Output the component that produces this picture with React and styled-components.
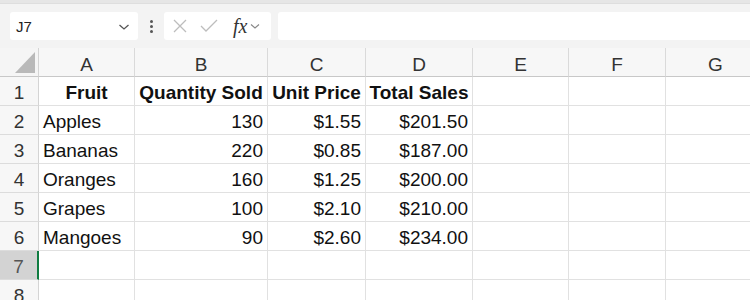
import styled, { createGlobalStyle } from 'styled-components'

const GlobalStyle = createGlobalStyle`
	html, body {
		margin: 0;
		padding: 0;
		background: #f3f3f3;
		font-family: 'Liberation Sans', Arial, sans-serif;
		overflow: hidden;
	}
`

const columns = ['A', 'B', 'C', 'D', 'E', 'F', 'G']
const widths = [96, 133, 98, 107, 96, 97, 100]

const rows = [
	['Fruit', 'Quantity Sold', 'Unit Price', 'Total Sales'],
	['Apples', '130', '$1.55', '$201.50'],
	['Bananas', '220', '$0.85', '$187.00'],
	['Oranges', '160', '$1.25', '$200.00'],
	['Grapes', '100', '$2.10', '$210.00'],
	['Mangoes', '90', '$2.60', '$234.00'],
	[],
	[],
]

function Chevron() {
	return (
		<svg width="12" height="8" viewBox="0 0 12 8">
			<path d="M1.5 2 L6 6 L10.5 2" fill="none" stroke="#555" strokeWidth="1.3" />
		</svg>
	)
}

function App() {
	return (
		<>
			<GlobalStyle />
			<Page>
				<TopStrip />
				<FormulaBar>
					<NameBox>
						<span>J7</span>
						<Chevron />
					</NameBox>
					<Dots>
						<i />
						<i />
						<i />
					</Dots>
					<FxBox>
						<svg width="18" height="18" viewBox="0 0 18 18">
							<path d="M3 3 L15 15 M15 3 L3 15" stroke="#bdbdbd" strokeWidth="1.3" />
						</svg>
						<svg width="20" height="18" viewBox="0 0 20 18">
							<path d="M2 9 L7 14 L18 3" fill="none" stroke="#bdbdbd" strokeWidth="1.3" />
						</svg>
						<Fx>
							fx
							<SmallChevron>
								<svg width="10" height="7" viewBox="0 0 10 7">
									<path d="M1 1.5 L5 5 L9 1.5" fill="none" stroke="#888" strokeWidth="1.1" />
								</svg>
							</SmallChevron>
						</Fx>
					</FxBox>
					<FormulaInput />
				</FormulaBar>
				<Sheet>
					<Corner>
						<Triangle />
					</Corner>
					{columns.map((c, i) => (
						<ColHead key={c} style={{ width: widths[i] }}>
							{c}
						</ColHead>
					))}
					{rows.map((r, ri) => (
						<Row key={ri}>
							<RowHead $selected={ri === 6}>{ri + 1}</RowHead>
							{columns.map((c, ci) => {
								const v = r[ci] || ''
								const numeric = ci > 0 && ri > 0
								return (
									<Cell
										key={c}
										style={{ width: widths[ci] }}
										$bold={ri === 0}
										$align={ri === 0 ? 'center' : numeric ? 'right' : 'left'}
									>
										{v}
									</Cell>
								)
							})}
						</Row>
					))}
				</Sheet>
			</Page>
		</>
	)
}

const Page = styled.div`
	width: 750px;
	height: 300px;
	display: flex;
	flex-direction: column;
`

const TopStrip = styled.div`
	height: 3px;
	background: #e6e6e6;
	border-bottom: 1px solid #dedede;
	margin-bottom: 8px;
`

const FormulaBar = styled.div`
	display: flex;
	align-items: stretch;
	height: 28px;
	padding-left: 10px;
	margin-bottom: 8px;
`

const NameBox = styled.div`
	width: 114px;
	background: #fff;
	border-radius: 3px;
	display: flex;
	align-items: center;
	justify-content: space-between;
	padding: 1px 8px 0 6px;
	font-size: 15px;
	color: #222;
`

const Dots = styled.div`
	width: 26px;
	display: flex;
	flex-direction: column;
	align-items: center;
	justify-content: center;
	gap: 2px;
	i {
		width: 3px;
		height: 3px;
		background: #555;
		border-radius: 50%;
	}
`

const FxBox = styled.div`
	width: 100px;
	background: #fff;
	border-radius: 3px;
	display: flex;
	align-items: center;
	gap: 10px;
	padding-left: 7px;
`

const Fx = styled.span`
	font-family: 'Liberation Serif', 'Times New Roman', serif;
	font-style: italic;
	font-size: 20px;
	color: #333;
	display: flex;
	align-items: center;
	margin-left: 4px;
`

const SmallChevron = styled.span`
	margin-left: 3px;
	display: flex;
`

const FormulaInput = styled.div`
	flex: 1;
	background: #fff;
	margin-left: 7px;
	border-radius: 3px 0 0 3px;
`

const Sheet = styled.div`
	display: grid;
	grid-template-columns: 39px repeat(7, auto);
	grid-auto-rows: 29px;
	background: #fff;
	flex: 1;
	overflow: hidden;
`

const Corner = styled.div`
	background: #f5f5f5;
	border-right: 1px solid #d4d4d4;
	border-bottom: 1px solid #c8c8c8;
	display: flex;
	align-items: flex-end;
	justify-content: flex-end;
	padding: 0 3px 3px 0;
`

const Triangle = styled.div`
	width: 0;
	height: 0;
	border-left: 20px solid transparent;
	border-bottom: 21px solid #b9b9b9;
`

const ColHead = styled.div`
	box-sizing: border-box;
	background: #f7f7f7;
	border-right: 1px solid #dadada;
	border-bottom: 1px solid #c8c8c8;
	display: flex;
	align-items: center;
	justify-content: center;
	font-size: 19px;
	color: #333;
	padding-top: 5px;
`

const Row = styled.div`
	display: contents;
`

const RowHead = styled.div`
	box-sizing: border-box;
	background: ${p => (p.$selected ? '#d3d3d3' : '#f7f7f7')};
	border-right: ${p => (p.$selected ? '2px solid #107c41' : '1px solid #d4d4d4')};
	border-bottom: 1px solid #dcdcdc;
	display: flex;
	align-items: center;
	justify-content: center;
	font-size: 19px;
	color: ${p => (p.$selected ? '#555' : '#333')};
	padding-top: 4px;
`

const Cell = styled.div`
	box-sizing: border-box;
	border-right: 1px solid #e1e1e1;
	border-bottom: 1px solid #e1e1e1;
	display: flex;
	align-items: center;
	justify-content: ${p =>
		p.$align === 'right' ? 'flex-end' : p.$align === 'center' ? 'center' : 'flex-start'};
	padding: 4px 4px 0;
	font-size: 19px;
	font-weight: ${p => (p.$bold ? 700 : 400)};
	color: #111;
	white-space: nowrap;
	overflow: hidden;
`

export default App
